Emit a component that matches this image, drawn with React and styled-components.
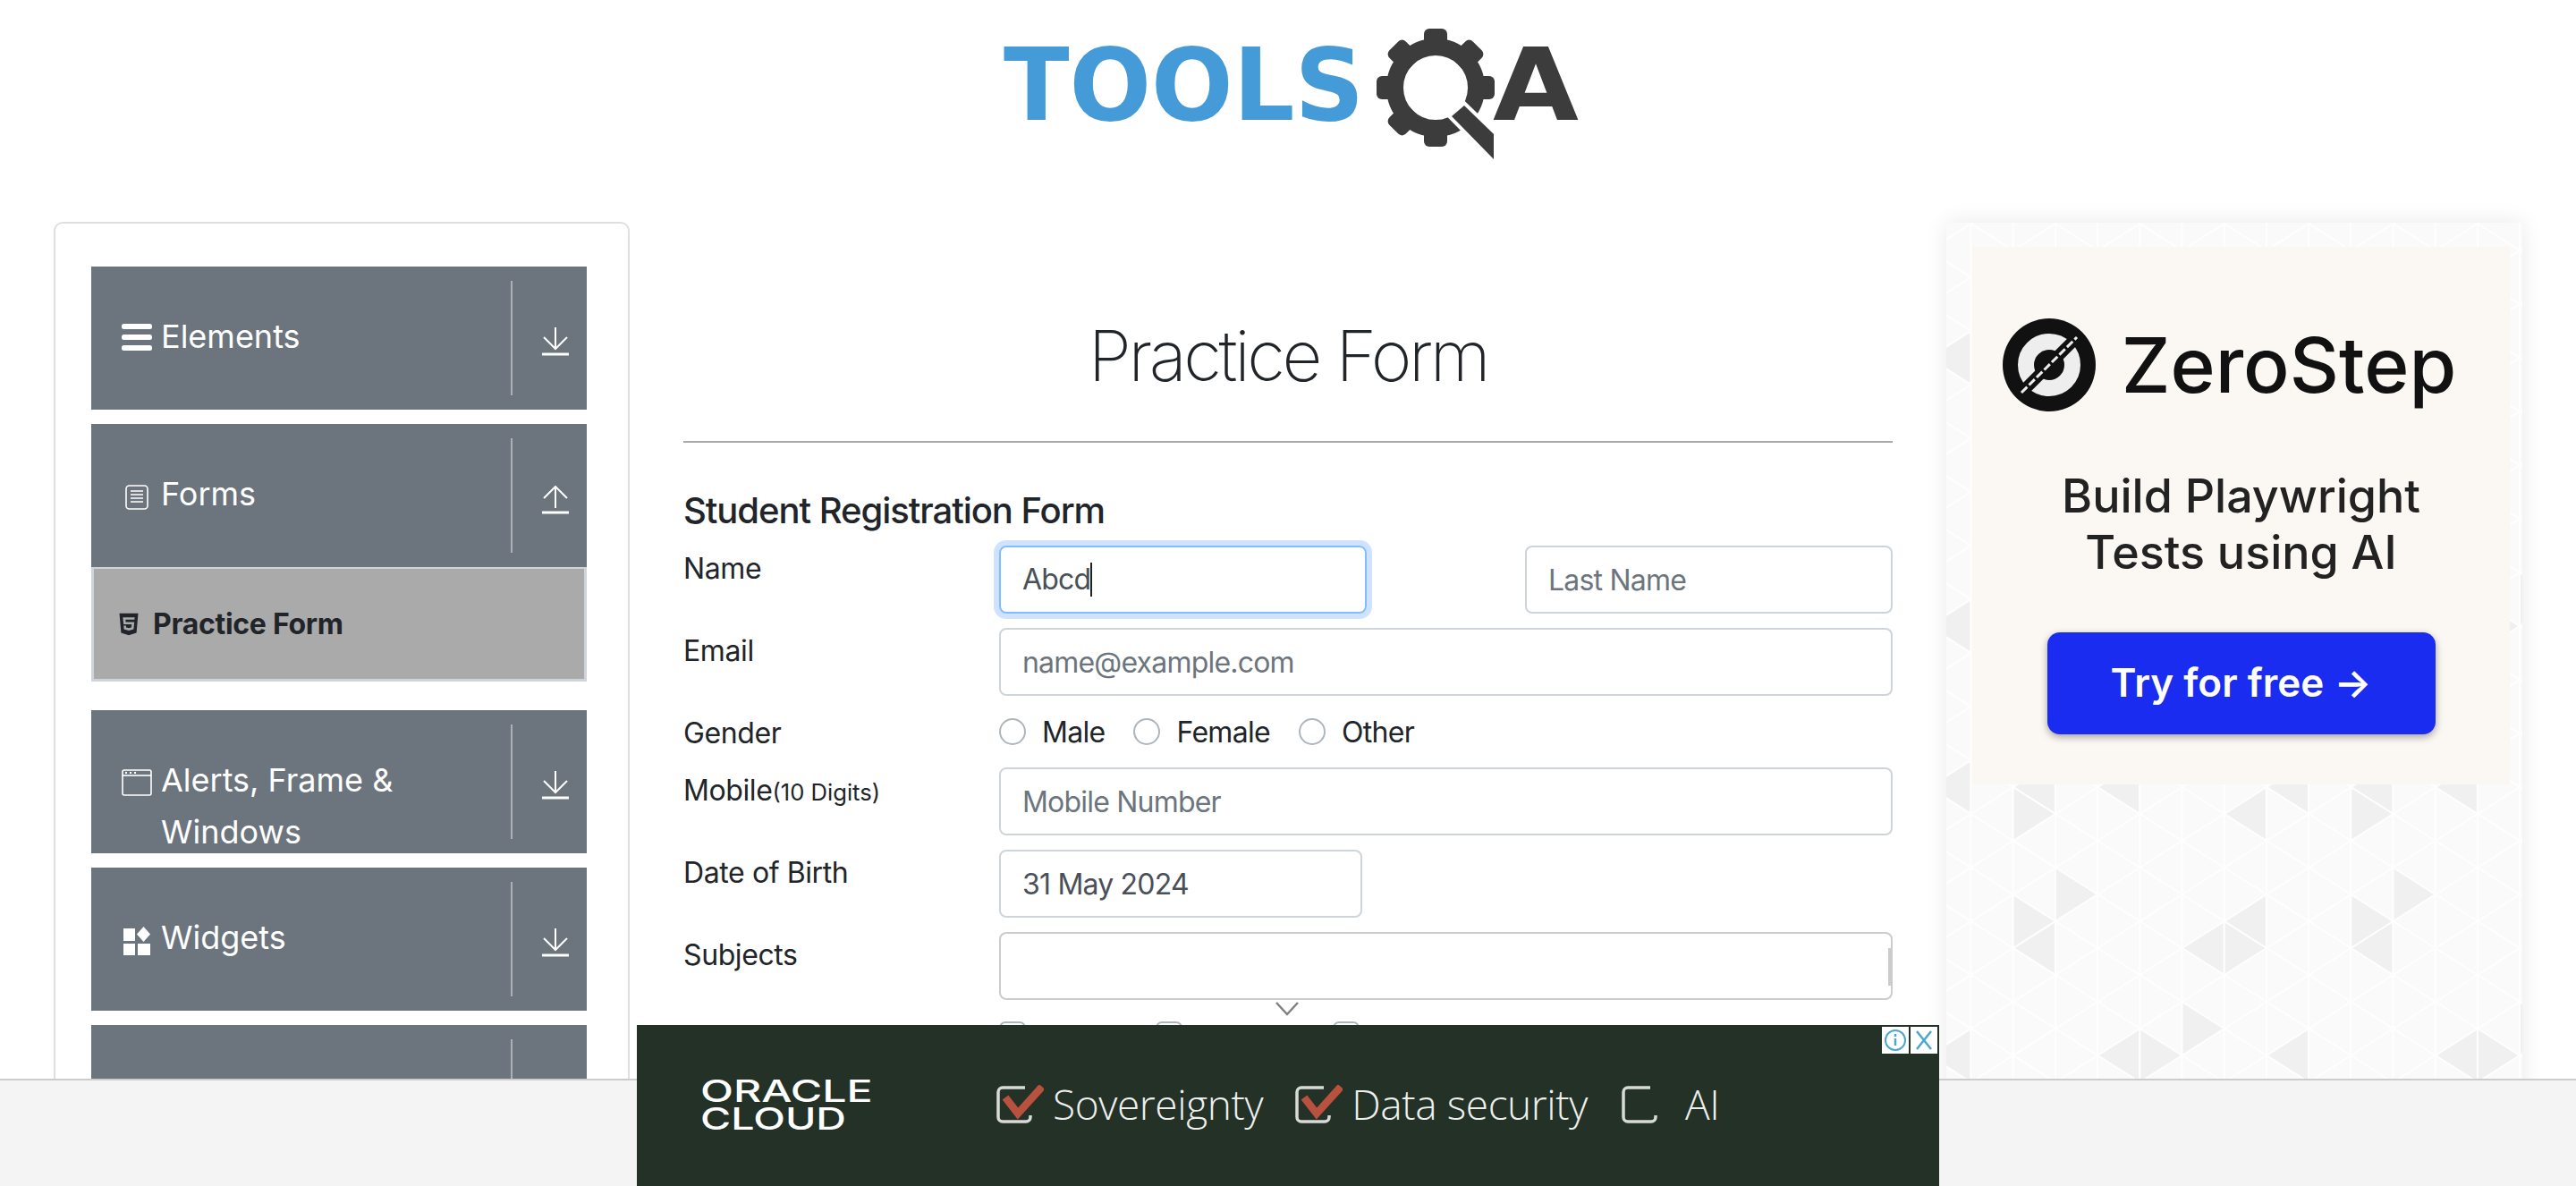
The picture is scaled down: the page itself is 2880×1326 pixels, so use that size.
import React from "react";
import styled, { createGlobalStyle } from "styled-components";
import { FaHtml5 } from "react-icons/fa";

const Global = createGlobalStyle`
  html, body { margin: 0; height: 100%; overflow: hidden; background: #fff; }
  body { font-family: Inter, "Liberation Sans", sans-serif; color: #212529; font-size: 32px; line-height: 48px; }
  * { box-sizing: border-box; }
`;

const Page = styled.div`height: 1326px; overflow: hidden;`;
const Header = styled.header`height: 248px; display: flex; justify-content: center; padding-top: 30px;`;
const Columns = styled.main`display: grid; grid-template-columns: 644px 1fr 644px; column-gap: 60px; padding: 0 60px;`;

/* sidebar */
const SideCard = styled.aside`
  border: 2px solid #dfdfdf; border-radius: 10px; padding: 48px 46px 40px 40px; min-height: 1300px;
  display: flex; flex-direction: column; gap: 16px;
`;
const Group = styled.div`
  height: 160px; background: #6c757d; overflow: hidden; display: flex; color: #fff; padding-top: 16px; flex: none;
`;
const GroupLabel = styled.div`
  flex: 1; display: flex; padding: 34px 0 0 34px; font-size: 36px; line-height: 57.6px; font-weight: 400; letter-spacing: 0;
`;
const GroupIcon = styled.span`width: 46px; flex: none; display: block; margin-right: -2px; padding-top: ${p => p.$top || 18}px; svg { display: block; margin-left: ${p => p.$left || 0}px; }`;
const GroupToggle = styled.div`
  width: 85px; height: 128px; border-left: 2px solid #adb1b5; flex: none; padding: ${p => p.$up ? 53 : 52}px 0 0 33px;
  svg { display: block; }
`;
const SubList = styled.div`margin-top: -16px; margin-bottom: 16px; flex: none;`;
const SubItem = styled.div`
  height: 128px; background: #aaa; border: 3px solid #ced4da; border-top-width: 2px; display: flex; align-items: center; gap: 13px;
  padding-left: 25px; font-weight: 700; font-size: 32px; letter-spacing: -0.3px; color: #212529;
`;

/* form */
const Center = styled.section`display: flex; flex-direction: column;`;
const Title = styled.h1`
  margin: 0; padding-top: 102px; height: 247px; text-align: center; font-size: 78px; line-height: 96px; font-weight: 200; letter-spacing: -3.4px;
  border-bottom: 2px solid #a8a8a8; color: #212529;
`;
const FormTitle = styled.h5`margin: 52px 0 15px; height: 48px; font-size: 40px; line-height: 48px; font-weight: 500; letter-spacing: -1.05px;`;
const Row = styled.div`display: grid; grid-template-columns: 353px 1fr; margin-bottom: 16px; position: relative;`;
const Label = styled.label`display: block; height: 48px; white-space: nowrap; font-size: 32px; line-height: 48px; letter-spacing: -0.4px; padding-top: ${p => p.$drop || 2}px;`;
const Small = styled.small`font-size: 25.6px; letter-spacing: 0;`;
const Fields = styled.div`display: flex; justify-content: space-between; align-items: center; min-height: 48px;`;
const Input = styled.input`
  display: block; width: ${p => p.$w || "100%"}; height: 76px; border: 2px solid ${p => p.$c || "#ced4da"}; border-radius: 8px; padding: 0 24px;
  font: 400 32px Inter, "Liberation Sans", sans-serif; letter-spacing: -0.8px; color: #495057; background: #fff; outline: none;
  &::placeholder { color: #6c757d; opacity: 1; }
`;
const FocusField = styled.div`
  width: 411px; height: 76px; border: 2px solid #80bdff; border-radius: 8px; padding: 0 24px; box-shadow: 0 0 0 6px #cfe2ff;
  font-size: 32px; line-height: 72px; color: #495057; letter-spacing: -0.8px; display: flex; align-items: center;
`;
const Caret = styled.i`display: block; width: 2px; height: 38px; background: #222;`;
const Choices = styled.div`display: flex; align-items: center; height: 48px;`;
const Radio = styled.span`display: block; width: 30px; height: 30px; border: 2px solid #adb5bd; border-radius: ${p => p.$box ? "7px" : "50%"}; background: #fff; margin-right: 18px; flex: none; margin-top: ${p => p.$box ? -2 : 0}px;`;
const ChoiceText = styled.span`margin-right: 32px; letter-spacing: -0.7px; padding-top: ${p => p.$drop || 2}px;`;
const SubjectBox = styled.div`height: 76px; border: 2px solid #ccc; border-radius: 8px; position: relative;`;
const ScrollSliver = styled.span`position: absolute; right: 0; top: 16px; width: 3px; height: 42px; background: #ccc;`;
const Chevron = styled.svg`position: absolute; left: 662px; top: 78px;`;

/* right ad */
const SideAd = styled.aside`
  position: relative; height: 1300px; background: #fdfdfd; box-shadow: 0 0 24px rgba(0,0,0,.09); overflow: visible; margin-top: 1px;
`;
const PatternSvg = styled.svg`position: absolute; inset: 0; display: block;`;
const AdCard = styled.div`
  position: relative; margin: 27px 14px 0 29px; height: 601px; background: #fbf8f3; display: flex; flex-direction: column; align-items: center;
`;
const BrandRow = styled.div`display: flex; align-items: center; gap: 28px; margin-top: 79px; height: 106px; color: #111; margin-left: -27px;`;
const BrandText = styled.span`font-size: 85.5px; font-weight: 500; letter-spacing: 0; line-height: 106px;`;
const AdHeadline = styled.div`margin-top: 62px; text-align: center; font-size: 52px; line-height: 63px; font-weight: 500; color: #222; letter-spacing: 0;`;
const AdButton = styled.div`
  margin-top: 58px; width: 434px; height: 114px; padding-bottom: 2px; background: #1a2cf0; border-radius: 14px; box-shadow: 0 3px 8px rgba(0,0,0,.35);
  color: #fff; font-size: 44px; font-weight: 600; display: flex; align-items: center; justify-content: center; letter-spacing: 0;
`;

/* bottom */
const BottomBar = styled.div`position: fixed; left: 0; right: 0; bottom: 0; height: 120px; background: #f4f4f4; border-top: 2px solid #ccc;`;
const BottomAd = styled.div`
  position: fixed; left: 712px; bottom: 0; width: 1456px; height: 180px; background: #243127; color: #eef0ee;
  display: flex; align-items: center; padding: 0 0 2px 71px;
`;
const OracleLogo = styled.div`flex: none; width: 330px; color: #fff; font-weight: 500; font-size: 34px; line-height: 31px; white-space: nowrap;`;
const OracleLine = styled.div`transform-origin: 0 50%; transform: scaleX(${p => p.$sx});`;
const Feature = styled.div`display: flex; align-items: center; margin-right: ${p => p.$mr}px;`;
const FeatureText = styled.span`font-family: "Open Sans", sans-serif; font-weight: 300; font-size: 46px; line-height: 60px; margin: -2px 0 0 ${p => p.$ml}px; letter-spacing: -0.4px;`;
const AdChoices = styled.div`position: absolute; top: 2px; right: 2px; display: flex; gap: 2px;`;
const ChoiceBox = styled.span`width: 30px; height: 30px; background: #fff; display: block; svg { display: block; }`;

/* icons */
const Bars = () => (
  <svg width="34" height="30" viewBox="0 0 34 30" fill="#fff">
    <rect width="34" height="6" rx="2.5" y="0" /><rect width="34" height="6" rx="2.5" y="12" /><rect width="34" height="6" rx="2.5" y="24" />
  </svg>
);
const DocIcon = () => (
  <svg width="26" height="28" viewBox="0 0 26 28" fill="none" stroke="#fff" strokeWidth="1.6">
    <rect x="1" y="1" width="24" height="26" rx="3.5" /><path d="M6 7h14M6 11h14M6 15h14M6 19h14" />
  </svg>
);
const WindowIcon = () => (
  <svg width="34" height="30" viewBox="0 0 34 30" fill="none" stroke="#fff" strokeWidth="1.6">
    <rect x="1" y="1" width="32" height="28" rx="2" /><path d="M1 7h32" />
    <path d="M4 4h2M9 4h2M14 4h2" strokeWidth="2" />
  </svg>
);
const WidgetIcon = () => (
  <svg width="30" height="32" viewBox="0 0 30 32" fill="#fff">
    <rect x="0" y="2" width="13" height="14" /><rect x="0" y="19" width="13" height="13" /><rect x="16" y="19" width="14" height="13" />
    <path d="M22.5 0 L30 8.5 L22.5 17 L15 8.5Z" />
  </svg>
);
const Arrow = ({ up }) => (
  <svg width="30" height="32" viewBox="0 0 30 32" fill="none" stroke="#fff" strokeWidth="2">
    {up ? <path d="M15 25V1M2 14 15 1 28 14" /> : <path d="M15 0V24M2 11 15 24 28 11" />}
    <path d="M0 30h30" strokeWidth="3" />
  </svg>
);

const Logo = () => {
  const teeth = [0, 45, 90, 180, 225, 270, 315];
  return (
    <svg width="680" height="150" viewBox="0 0 680 150" style={{ display: "block" }}>
      <text x="22" y="104" fill="#459bd7" fontFamily="DejaVu Sans" fontWeight="700" fontSize="113" textLength="403" lengthAdjust="spacingAndGlyphs">TOOLS</text>
      <g transform="translate(505 68)">
        {teeth.map(a => <rect key={a} x="-13" y="-66" width="26" height="30" rx="6" fill="#3c3c3c" transform={`rotate(${a})`} />)}
        <circle r="45.5" fill="none" stroke="#3c3c3c" strokeWidth="19" />
      </g>
      <polygon points="523,100 537,88 570,120 570,148" fill="#3c3c3c" stroke="#fff" strokeWidth="8" paintOrder="stroke" />
      <text x="569" y="104" fill="#3c3c3c" fontFamily="DejaVu Sans" fontWeight="700" fontSize="113" textLength="96" lengthAdjust="spacingAndGlyphs">A</text>
    </svg>
  );
};

const ZeroMark = () => (
  <svg width="106" height="106" viewBox="0 0 106 106">
    <circle cx="53" cy="53" r="52" fill="#111" />
    <circle cx="53" cy="53" r="26" fill="none" stroke="#eee" strokeWidth="18" />
    <path d="M20 86 86 20" stroke="#111" strokeWidth="13" />
    <path d="M22 84 84 22" stroke="#eee" strokeWidth="3" strokeDasharray="9 3" />
  </svg>
);

const PATTERN_W = 644, PATTERN_H = 1300;
const cx = c => 27.5 + 47.2 * c;
const ry = r => 661 + 30 * r;
const DARK = new Set([
  "R2:0", "R3:3", "R2:4", "R7:5", "R6:8", "R5:9",
  "L1:15", "L3:15", "L7:15", "L1:5", "L5:5", "L6:4", "L3:9", "L7:9", "L6:0",
]);
const mod = (a, n) => ((a % n) + n) % n;
const triangles = [];
for (let c = -2; c < 16; c++) {
  for (let r = -24; r < 24; r++) {
    if (mod(c + r, 2) !== 0) continue;
    const key = `${mod(c, 8)}:${mod(r, 16)}`;
    triangles.push({ k: `R${c}:${r}`, d: DARK.has("R" + key), p: `${cx(c - 1)},${ry(r - 1)} ${cx(c - 1)},${ry(r + 1)} ${cx(c)},${ry(r)}` });
    triangles.push({ k: `L${c}:${r}`, d: DARK.has("L" + key), p: `${cx(c + 1)},${ry(r - 1)} ${cx(c + 1)},${ry(r + 1)} ${cx(c)},${ry(r)}` });
  }
}
const Pattern = () => (
  <PatternSvg width={PATTERN_W} height={PATTERN_H} viewBox={`0 0 ${PATTERN_W} ${PATTERN_H}`}>
    {triangles.map(t => <polygon key={t.k} points={t.p} fill={t.d ? "#f0f0f0" : "#fafafa"} stroke="#fefefe" strokeWidth="2" strokeLinejoin="round" />)}
  </PatternSvg>
);

const CheckBox = ({ checked }) => (
  <svg width="54" height="44" viewBox="0 0 54 44" fill="none" style={{ display: "block", flex: "none" }}>
    <path d="M33 3H8a5 5 0 0 0-5 5v28a5 5 0 0 0 5 5h26a5 5 0 0 0 5-5v-2" stroke="#d8dad8" strokeWidth="3.5" />
    {checked && <path d="M11 14 25 32 52 2" stroke="#b8523f" strokeWidth="8.5" />}
  </svg>
);

export default function App() {
  return (
    <Page>
      <Global />
      <Header><Logo /></Header>
      <Columns>
        <SideCard>
          <Group>
            <GroupLabel><GroupIcon $top={14}><Bars /></GroupIcon>Elements</GroupLabel>
            <GroupToggle><Arrow /></GroupToggle>
          </Group>
          <Group>
            <GroupLabel><GroupIcon $top={18} $left={4}><DocIcon /></GroupIcon>Forms</GroupLabel>
            <GroupToggle $up><Arrow up /></GroupToggle>
          </Group>
          <SubList>
            <SubItem><FaHtml5 size={28} color="#212529" />Practice Form</SubItem>
          </SubList>
          <Group>
            <GroupLabel><GroupIcon $top={16}><WindowIcon /></GroupIcon><span>Alerts, Frame &amp; Windows</span></GroupLabel>
            <GroupToggle><Arrow /></GroupToggle>
          </Group>
          <Group>
            <GroupLabel><GroupIcon $top={16} $left={2}><WidgetIcon /></GroupIcon>Widgets</GroupLabel>
            <GroupToggle><Arrow /></GroupToggle>
          </Group>
          <Group>
            <GroupLabel>Interactions</GroupLabel>
            <GroupToggle><Arrow /></GroupToggle>
          </Group>
        </SideCard>

        <Center>
          <Title>Practice Form</Title>
          <FormTitle>Student Registration Form</FormTitle>
          <Row>
            <Label>Name</Label>
            <Fields>
              <FocusField>Abcd<Caret /></FocusField>
              <Input $w="411px" placeholder="Last Name" readOnly />
            </Fields>
          </Row>
          <Row>
            <Label>Email</Label>
            <Input placeholder="name@example.com" readOnly />
          </Row>
          <Row>
            <Label>Gender</Label>
            <Choices>
              <Radio /><ChoiceText>Male</ChoiceText>
              <Radio /><ChoiceText>Female</ChoiceText>
              <Radio /><ChoiceText>Other</ChoiceText>
            </Choices>
          </Row>
          <Row>
            <Label>Mobile<Small>(10 Digits)</Small></Label>
            <Input placeholder="Mobile Number" readOnly />
          </Row>
          <Row>
            <Label>Date of Birth</Label>
            <Input $w="406px" defaultValue="31 May 2024" readOnly />
          </Row>
          <Row>
            <Label>Subjects</Label>
            <SubjectBox><ScrollSliver /></SubjectBox>
            <Chevron width="26" height="16" viewBox="0 0 26 16" fill="none" stroke="#808080" strokeWidth="2.5"><path d="M1 1 13 14 25 1" /></Chevron>
          </Row>
          <Row>
            <Label $drop={7}>Hobbies</Label>
            <Choices>
              <Radio $box /><ChoiceText $drop={8}>Sports</ChoiceText>
              <Radio $box /><ChoiceText $drop={8}>Reading</ChoiceText>
              <Radio $box /><ChoiceText $drop={8}>Music</ChoiceText>
            </Choices>
          </Row>
        </Center>

        <SideAd>
          <Pattern />
          <AdCard>
            <BrandRow><ZeroMark /><BrandText>ZeroStep</BrandText></BrandRow>
            <AdHeadline>Build Playwright<br />Tests using AI</AdHeadline>
            <AdButton>Try for free →</AdButton>
          </AdCard>
        </SideAd>
      </Columns>

      <BottomBar />
      <BottomAd>
        <OracleLogo>
          <OracleLine $sx={1.42}>ORACLE</OracleLine>
          <OracleLine $sx={1.37}>CLOUD</OracleLine>
        </OracleLogo>
        <Feature $mr={35}><CheckBox checked /><FeatureText $ml={10}>Sovereignty</FeatureText></Feature>
        <Feature $mr={37}><CheckBox checked /><FeatureText $ml={10}>Data security</FeatureText></Feature>
        <Feature $mr={0}><CheckBox /><FeatureText $ml={18}>AI</FeatureText></Feature>
        <AdChoices>
          <ChoiceBox>
            <svg width="30" height="30" viewBox="0 0 30 30" fill="none" stroke="#4aa8cc" strokeWidth="2"><circle cx="15" cy="15" r="11" /><path d="M15 13v8" strokeWidth="2.5" /><path d="M15 8v3" strokeWidth="2.5" /></svg>
          </ChoiceBox>
          <ChoiceBox>
            <svg width="30" height="30" viewBox="0 0 30 30" fill="none" stroke="#4aa8cc" strokeWidth="2.5"><path d="M7 5 23 25M23 5 7 25" /></svg>
          </ChoiceBox>
        </AdChoices>
      </BottomAd>
    </Page>
  );
}
